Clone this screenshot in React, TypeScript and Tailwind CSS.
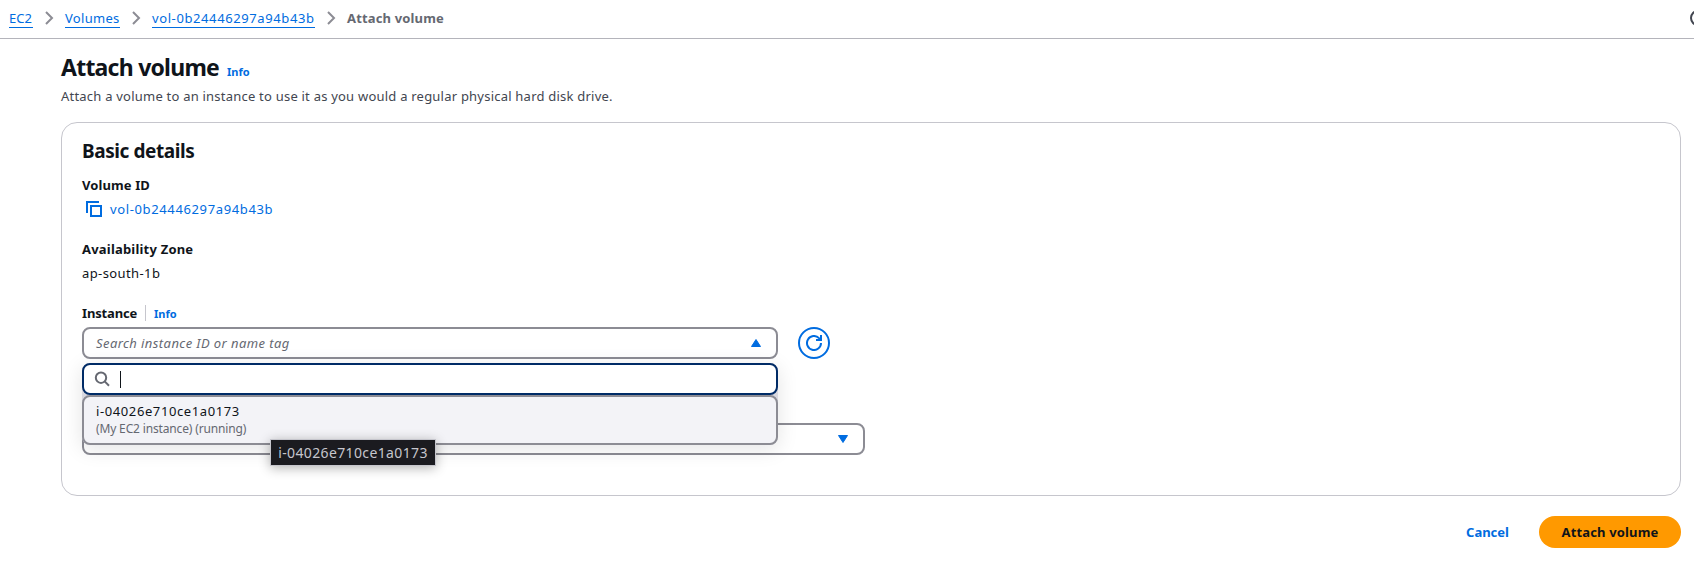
import React from "react";

function Chevron() {
  return (
    <svg className="mx-3 h-4 w-2 shrink-0 overflow-visible" viewBox="0 0 8 16" fill="none" stroke="#8c8c94" strokeWidth="2">
      <path d="M1 2l6 6-6 6" />
    </svg>
  );
}

function Crumb({ children, className }: { children: React.ReactNode; className: string }) {
  return (
    <a className={`h-5 whitespace-nowrap border-b border-[#006ce0] leading-5 text-[#006ce0] ${className}`}>{children}</a>
  );
}

function CopyIcon() {
  return (
    <svg className="h-4 w-4" viewBox="0 0 16 16" fill="none" stroke="#006ce0" strokeWidth="2">
      <path d="M1 12V1h12" />
      <path d="M5 5h10v10H5z" />
    </svg>
  );
}

function RefreshIcon() {
  return (
    <svg className="h-4 w-4" viewBox="0 0 16 16" fill="none" stroke="#006ce0" strokeWidth="2">
      <path d="M15 8a7 7 0 1 1-2-4.9L15 5" />
      <path d="M15 0v5h-5" />
    </svg>
  );
}

function SearchIcon() {
  return (
    <svg className="h-4 w-4" viewBox="0 0 16 16" fill="none" stroke="#656871" strokeWidth="2">
      <circle cx="7" cy="6.7" r="5.2" />
      <path d="M15 14.7l-4.3-4.3" />
    </svg>
  );
}

export default function App() {
  return (
    <div className="flex h-[562px] w-[1694px] flex-col overflow-hidden bg-white font-['Noto_Sans','Open_Sans',sans-serif] text-[13px] leading-5 text-[#0f141a]">
      <header className="flex h-[39px] shrink-0 items-center border-b border-[#b4b4bb] pb-[2px] pl-[9px]">
        <Crumb className="w-6">EC2</Crumb>
        <Chevron />
        <Crumb className="w-[55px] tracking-[0.3px]">Volumes</Crumb>
        <Chevron />
        <Crumb className="w-[163px] tracking-[0.6px]">vol-0b24446297a94b43b</Crumb>
        <Chevron />
        <span className="font-bold tracking-[0.15px] text-[#656871]">Attach volume</span>
        <svg className="ml-auto -mr-3 h-4 w-4 shrink-0" viewBox="0 0 16 16" fill="none" stroke="#424650" strokeWidth="2">
          <circle cx="8" cy="8" r="7" />
        </svg>
      </header>

      <main className="flex flex-col pl-[61px] pr-[13px]">
        <div className="mt-[13px] flex h-[30px] items-baseline gap-2">
          <h1 className="text-[23px] font-bold leading-[30px] tracking-[-0.76px]">Attach volume</h1>
          <a className="text-[11px] font-bold text-[#006ce0]">Info</a>
        </div>
        <p className="mt-1 h-5 tracking-[0.22px] text-[#424650]">
          Attach a volume to an instance to use it as you would a regular physical hard disk drive.
        </p>

        <section className="mt-4 flex h-[374px] flex-col rounded-2xl border border-[#c6c6cd] pl-5">
          <h2 className="mt-4 h-6 text-[19px] font-bold leading-6 tracking-[-0.42px]">Basic details</h2>
          <h3 className="mt-3 h-5 font-bold tracking-[0.1px]">Volume ID</h3>
          <div className="mt-1 flex h-5 items-center gap-2 pl-1">
            <CopyIcon />
            <a className="tracking-[0.63px] text-[#006ce0]">vol-0b24446297a94b43b</a>
          </div>
          <h3 className="mt-5 h-5 font-bold tracking-[0.2px]">Availability Zone</h3>
          <div className="mt-1 h-5 tracking-[0.4px]">ap-south-1b</div>
          <div className="mt-5 flex h-5 items-center">
            <h3 className="w-[63px] font-bold tracking-[-0.15px]">Instance</h3>
            <div className="flex h-4 items-center border-l border-[#c6c6cd] pl-2">
              <a className="pt-px text-[11px] font-bold text-[#006ce0]">Info</a>
            </div>
          </div>
          <div className="mt-1 flex gap-5">
            <div className="relative h-8 w-[696px]">
              <div className="flex h-8 items-center justify-between rounded-lg border-2 border-[#8c8c94] pl-3 pr-[15px]">
                <span className="italic tracking-[0.42px] text-[#656871]">Search instance ID or name tag</span>
                <svg className="h-2 w-[10px]" viewBox="0 0 10 8" fill="#006ce0" stroke="#006ce0" strokeLinejoin="round">
                  <path d="M5 .5l4.5 7h-9z" />
                </svg>
              </div>
              <div className="absolute left-0 top-9 z-10 h-[82px] w-[696px] rounded-lg bg-[#d8d8e0] shadow-[0_4px_20px_1px_rgba(0,7,22,0.10)]">
                <div className="flex h-8 items-center rounded-lg border-2 border-[#002b66] bg-white pl-[10px]">
                  <SearchIcon />
                  <div className="ml-[10px] h-[17px] w-px bg-[#0f141a]" />
                </div>
                <div className="h-[50px] rounded-lg border-2 border-[#8c8c94] bg-[#f3f3f7] pl-3 pt-1">
                  <div className="h-5 leading-5 tracking-[0.6px]">i-04026e710ce1a0173</div>
                  <div className="h-4 text-[12px] leading-4 tracking-[-0.15px] text-[#656871]">(My EC2 instance) (running)</div>
                </div>
                <div className="absolute left-[188px] top-[76px] flex h-[27px] w-[166px] items-center justify-center border border-[#c6c6cd] bg-[#1b1b20] text-[14px] tracking-[0.37px] text-[#c6c6cd] shadow-[0_2px_12px_rgba(0,0,0,0.3)]">
                  i-04026e710ce1a0173
                </div>
              </div>
            </div>
            <button className="flex h-8 w-8 items-center justify-center rounded-full border-2 border-[#006ce0]">
              <RefreshIcon />
            </button>
          </div>
          <div className="mt-16 flex h-8 w-[783px] shrink-0 items-center justify-end rounded-lg border-2 border-[#8c8c94] pr-[15px]">
            <svg className="h-2 w-[10px]" viewBox="0 0 10 8" fill="#006ce0" stroke="#006ce0" strokeLinejoin="round">
              <path d="M5 7.5L.5.5h9z" />
            </svg>
          </div>
        </section>

        <footer className="mt-5 flex h-8 items-center justify-end font-bold">
          <button className="mr-[30px] w-[43px] text-[#006ce0]">Cancel</button>
          <button className="h-8 w-[142px] rounded-full bg-[#ff9900] tracking-[0.15px]">Attach volume</button>
        </footer>
      </main>
    </div>
  );
}
